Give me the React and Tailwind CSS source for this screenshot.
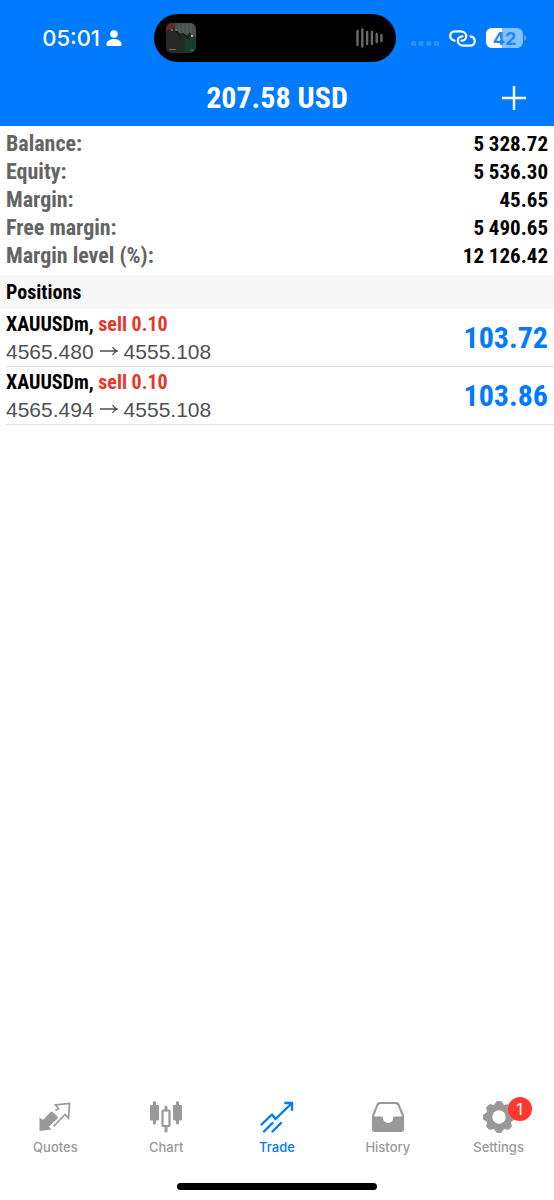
const account = [
  { label: 'Balance:', value: '5 328.72' },
  { label: 'Equity:', value: '5 536.30' },
  { label: 'Margin:', value: '45.65' },
  { label: 'Free margin:', value: '5 490.65' },
  { label: 'Margin level (%):', value: '12 126.42' },
]

const positions = [
  { id: 1, symbol: 'XAUUSDm', side: 'sell 0.10', open: '4565.480', current: '4555.108', profit: '103.72' },
  { id: 2, symbol: 'XAUUSDm', side: 'sell 0.10', open: '4565.494', current: '4555.108', profit: '103.86' },
]

const tabs = [
  { name: 'Quotes', Icon: QuotesIcon },
  { name: 'Chart', Icon: ChartIcon },
  { name: 'Trade', Icon: TradeIcon, active: true },
  { name: 'History', Icon: HistoryIcon },
  { name: 'Settings', Icon: SettingsIcon, badge: 1 },
]

function QuotesIcon() {
  return (
    <svg viewBox="0 0 34 34" className="size-[34px]" fill="none">
      <path d="M1.500 16.500 5 19 12.500 11Q13.500 10 14.500 11L19.500 15.500Q20.500 16.500 19.500 17.500L11 25.500 13.500 28.500 1.500 30Z" fill="currentColor" />
      <path
        d="M17.500 9.500 20.500 7.500 17.500 4 31.500 2.500 30.500 17 27 13.500 15.500 25.500"
        stroke="currentColor"
        strokeWidth="1.7"
      />
    </svg>
  )
}

function ChartIcon() {
  return (
    <svg viewBox="0 0 34 34" className="size-[34px]" fill="none" stroke="currentColor">
      <path d="M5.500 1.500V22M28.500 1.500V22M17 6V9M17 26V30" strokeWidth="3" strokeLinecap="round" />
      <rect x="1" y="4" width="9" height="15.500" rx="1" fill="currentColor" stroke="none" />
      <rect x="24" y="4" width="9" height="15.500" rx="1" fill="currentColor" stroke="none" />
      <rect x="13.500" y="9.500" width="7" height="15.500" rx="0.500" strokeWidth="2.200" />
    </svg>
  )
}

function TradeIcon() {
  return (
    <svg viewBox="0 0 34 34" className="size-[34px]" fill="none" stroke="currentColor" strokeWidth="2.4">
      <path d="M1.5 23.5 12 13.5 15.5 18 31.5 2.5" strokeLinejoin="round" strokeLinecap="round" />
      <path d="M25.5 2H32V8.5" strokeLinecap="square" />
      <path d="M4 30.5 12.5 22M12.5 30.5 21 22" strokeLinecap="round" />
    </svg>
  )
}

function HistoryIcon() {
  return (
    <svg viewBox="0 0 34 34" className="size-[34px]" fill="none">
      <path
        fillRule="evenodd"
        clipRule="evenodd"
        fill="currentColor"
        d="M8.5 1h17a3 3 0 0 1 2.7 1.8l4.3 10.2q.5 1.200.5 2.400V28a3 3 0 0 1-3 3H4a3 3 0 0 1-3-3V15.400q0-1.200.5-2.400L5.800 2.800A3 3 0 0 1 8.500 1ZM9.200 3 7.400 4.200 3.300 14.500Q3 15.600 4 15.600H10.600Q12 15.600 12 17a5.100 5.100 0 0 0 10.200 0Q22.200 15.600 23.600 15.600H30Q31 15.600 30.700 14.500L26.600 4.200 24.800 3Z"
      />
    </svg>
  )
}

function SettingsIcon() {
  return (
    <svg viewBox="0 0 34 34" className="size-[34px]" fill="currentColor">
      <mask id="gear-hole">
        <rect width="34" height="34" fill="white" />
        <circle cx="17" cy="16" r="6.700" fill="black" />
      </mask>
      <g mask="url(#gear-hole)">
        <circle cx="17" cy="16" r="13" />
        {[0, 45, 90, 135].map((angle) => (
          <path
            key={angle}
            transform={`rotate(${angle} 17 16)`}
            d="M11.500 5 14 1Q14.500 0 15.500 0H18.500Q19.500 0 20 1L22.500 5V27L20 31Q19.500 32 18.500 32H15.500Q14.500 32 14 31L11.500 27Z"
          />
        ))}
      </g>
    </svg>
  )
}

function ArrowIcon() {
  return (
    <svg viewBox="0 0 18 14" className="h-3.5 w-[18px]" fill="none" stroke="currentColor" strokeWidth="1.300">
      <path d="M0 6H17M12.500 2Q14 5 17.500 6 14 7 12.500 10" />
    </svg>
  )
}

function AlbumArt() {
  return (
    <svg viewBox="0 0 30 30" className="size-[30px] rounded-md">
      <rect width="30" height="30" fill="#343836" />
      <path d="M9 0H30V14L20 12 9 8Z" fill="#4a504d" />
      <path d="M0 0H9L7 6 0 8Z" fill="#672725" />
      <path d="M0 8 8 5 14 11 19 14 21 30H0Z" fill="#252827" />
      <path d="M18 17 24 12 30 15V30H19Z" fill="#173c29" />
      <path d="M13 1V10M17 1V11M21 1V11M25 1V12" stroke="#626864" strokeWidth="0.7" />
      <path d="M10 8 14 13 17 11 22 15 24 10" stroke="#151c19" strokeWidth="2" fill="none" />
      <circle cx="26" cy="13" r="1" fill="#d4d8d3" />
      <circle cx="6" cy="7" r="0.800" fill="#d8c9c0" />
      <circle cx="10" cy="7" r="0.700" fill="#d8c9c0" />
      <path d="M3 26.500H10M24 27H28" stroke="#7d827e" strokeWidth="0.800" />
    </svg>
  )
}

function StatusBar() {
  return (
    <div className="grid grid-cols-[1fr_44%_1fr] items-center pt-3.5 pr-1">
      <div className="flex items-center justify-end gap-1.5 pr-8">
        <span className="font-['Inter'] text-[22px] leading-6 font-medium">05:01</span>
        <svg viewBox="0 0 16 16" className="size-4" fill="currentColor">
          <circle cx="8" cy="4" r="3.800" />
          <path d="M.5 14.500C.5 11.200 3.800 9 8 9s7.500 2.200 7.500 5.500Q15.500 16 14 16H2Q.5 16 .5 14.500Z" />
        </svg>
      </div>
      <div className="flex h-12 items-center justify-between rounded-full bg-black px-3">
        <AlbumArt />
        <svg viewBox="0 0 28 20" className="h-5 w-7" stroke="#6b6865" strokeWidth="2.400" strokeLinecap="round">
          <path d="M1.500 3V17M6.300 1.500V18.500M11.100 4V16M15.900 4V16M20.700 6V14M25.500 7V13" />
        </svg>
      </div>
      <div className="flex items-center justify-end gap-2.5 pr-6">
        <svg viewBox="0 0 28 16" className="h-4 w-7 fill-[#2b91ff]">
          <rect x="0" y="11" width="5" height="5" rx="1.500" />
          <rect x="7.700" y="11" width="5" height="5" rx="1.500" />
          <rect x="15.400" y="11" width="5" height="5" rx="1.500" />
          <rect x="23" y="11" width="5" height="5" rx="1.500" />
        </svg>
        <svg viewBox="0 0 27 17" className="h-[17px] w-[27px]" fill="none" stroke="currentColor" strokeWidth="2.200" strokeLinecap="round">
          <path d="M5.500 10.600C2.500 9.800 1.200 8 1.200 6 1.200 3.300 3.200 1.300 6 1.300H11.500C14.800 1.300 17.200 3.500 17.200 6.200 17.200 8.800 15.300 10.700 12.500 10.700" />
          <path d="M21.500 6.400C24.500 7.200 25.800 9 25.800 11 25.800 13.700 23.800 15.700 21 15.700H14.500C11.200 15.700 8.800 13.500 8.800 10.800 8.800 8.200 10.700 6.300 13.500 6.300" />
        </svg>
        <svg viewBox="0 0 40 20" className="h-5 w-10">
          <clipPath id="battery">
            <rect width="37" height="20" rx="6" />
          </clipPath>
          <g clipPath="url(#battery)">
            <rect width="37" height="20" fill="#86c0ff" />
            <rect width="16" height="20" fill="white" />
          </g>
          <path d="M38.500 7Q40 8 40 10T38.500 13Z" fill="#86c0ff" />
          <text x="18.500" y="16.500" textAnchor="middle" className="fill-[#1c86ff] font-['Inter'] text-[18px] font-bold">
            42
          </text>
        </svg>
      </div>
    </div>
  )
}

export default function App() {
  return (
    <div className="flex min-h-screen flex-col bg-white font-['Roboto_Condensed','Liberation_Sans',sans-serif] text-black">
      <header className="bg-[#007aff] pb-2 text-white">
        <StatusBar />
        <div className="mt-4 grid grid-cols-[1fr_auto_1fr] items-center">
          <h1 className="col-start-2 text-[30px] leading-10 font-bold">207.58 USD</h1>
          <button type="button" aria-label="New order" className="mr-7 justify-self-end">
            <svg viewBox="0 0 24 24" className="size-6" stroke="currentColor" strokeWidth="2.400">
              <path d="M12 0V24M0 12H24" />
            </svg>
          </button>
        </div>
      </header>

      <main>
        <table className="mt-1 mb-[5px] w-full text-[22px] leading-7 font-bold">
          <tbody>
            {account.map((row) => (
              <tr key={row.label}>
                <th scope="row" className="p-0 pl-1.5 text-left text-[#646464]">{row.label}</th>
                <td className="p-0 pr-1.5 text-right text-[21px]">{row.value}</td>
              </tr>
            ))}
          </tbody>
        </table>

        <h2 className="bg-[#f7f7f7] px-1.5 text-[20px] leading-[34px] font-bold">Positions</h2>
        <ul>
          {positions.map((item) => (
            <li key={item.id} className="ml-1.5 flex items-center justify-between border-b border-[#dedede] pt-0.5 pr-1.5 pb-px">
              <div>
                <p className="text-[20px] leading-[27px] font-bold">
                  {item.symbol}, <span className="text-[#e2382d]">{item.side}</span>
                </p>
                <p className="flex items-center gap-1.5 font-['Liberation_Sans',sans-serif] text-[21px] leading-[27px] text-[#505054]">
                  <span>{item.open}</span>
                  <ArrowIcon />
                  <span>{item.current}</span>
                </p>
              </div>
              <span className="text-[30px] leading-10 font-bold text-[#007aff]">{item.profit}</span>
            </li>
          ))}
        </ul>
      </main>

      <footer className="mt-auto">
        <nav className="grid grid-cols-5">
          {tabs.map(({ name, Icon, active, badge }) => (
            <button
              key={name}
              type="button"
              aria-current={active ? 'page' : undefined}
              className={`flex flex-col items-center gap-1 ${active ? 'text-[#007aff]' : 'text-[#999999]'}`}
            >
              <span className="relative">
                <Icon />
                {badge && (
                  <span className="absolute -top-1 -right-4 flex size-6 items-center justify-center rounded-full bg-[#ff3830] font-['Inter'] text-base text-white">
                    {badge}
                  </span>
                )}
              </span>
              <span className="font-['Inter'] text-[13px] leading-4 font-medium">{name}</span>
            </button>
          ))}
        </nav>
        <div className="mx-auto mt-7 mb-2.5 h-[7px] w-[36%] rounded-full bg-black" />
      </footer>
    </div>
  )
}
